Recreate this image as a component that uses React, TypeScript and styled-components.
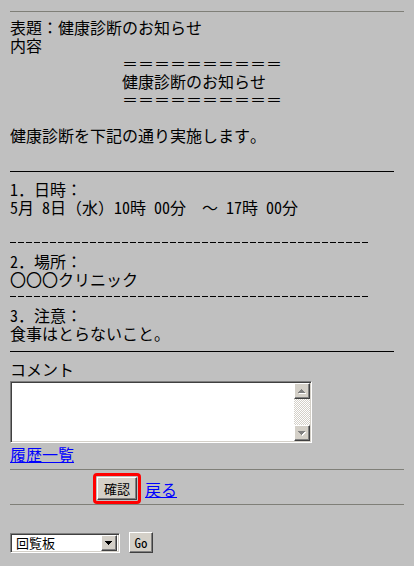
import React from "react";
import styled, { createGlobalStyle, css } from "styled-components";

const GlobalStyle = createGlobalStyle`
  html, body {
    margin: 0;
    padding: 0;
    background: #c0c0c0;
  }
  body {
    font-family: "Noto Sans Mono CJK JP", "Noto Sans CJK JP", sans-serif;
    font-size: 16px;
    line-height: 18px;
    color: #000;
  }
`;

const sunken = css`
  box-sizing: border-box;
  border: 1px solid;
  border-color: #808080 #ffffff #ffffff #808080;
  box-shadow: inset 1px 1px #404040, inset -1px -1px #d4d0c8;
`;

const raised = css`
  box-sizing: border-box;
  background: #d4d0c8;
  border: 1px solid;
  border-color: #ffffff #404040 #404040 #ffffff;
  box-shadow: inset -1px -1px #808080;
`;

const Page = styled.div`
  padding: 11px 10px 0;
  min-height: 566px;
  box-sizing: border-box;
`;

const Rule = styled.div<{ $gap?: number }>`
  height: 0;
  border-top: 1px solid #7f7f78;
  margin-top: ${(p) => p.$gap ?? 0}px;
`;

const Message = styled.div`
  margin-top: 6px;
`;

const Line = styled.div<{ $indent?: boolean }>`
  height: 18px;
  white-space: pre;
  padding-left: ${(p) => (p.$indent ? 112 : 0)}px;
`;

const Separator = styled.div<{ $dashed?: boolean }>`
  height: 18px;
  display: flex;
  &::after {
    content: "";
    margin-top: ${(p) => (p.$dashed ? 8 : 9)}px;
    height: 1px;
    width: ${(p) => (p.$dashed ? 360 : 384)}px;
    background: ${(p) =>
      p.$dashed
        ? "repeating-linear-gradient(to right, #000 0 6px, transparent 6px 8px)"
        : "#000"};
  }
`;

const CommentBox = styled.div`
  ${sunken};
  display: flex;
  width: 302px;
  height: 62px;
  margin-top: 3px;
  padding: 1px;
  background: #fff;
`;

const TextArea = styled.textarea`
  flex: 1;
  border: none;
  outline: none;
  resize: none;
  padding: 2px;
  margin: 0;
  background: #fff;
  font: inherit;
  font-size: 13px;
`;

const ScrollBar = styled.div`
  width: 16px;
  display: flex;
  flex-direction: column;
`;

const ScrollButton = styled.div`
  ${raised};
  width: 16px;
  height: 16px;
  display: flex;
  align-items: center;
  justify-content: center;
`;

const Track = styled.div`
  flex: 1;
  background: repeating-conic-gradient(#ffffff 0 25%, #d4d0c8 0 50%) 0 0 / 2px 2px;
`;

const LinkLine = styled.div`
  height: 18px;
  margin-top: 2px;
`;

const TextLink = styled.a`
  color: #0000ff;
  text-decoration: underline;
  cursor: pointer;
`;

const ActionRow = styled.div`
  display: flex;
  align-items: center;
  gap: 4px;
  margin-top: 3px;
  padding-left: 83px;
  height: 31px;
`;

const Highlight = styled.div`
  display: flex;
  border: 3px solid #ff0000;
  border-radius: 4px;
  padding: 1px;
`;

const Button = styled.button<{ $w?: number; $h?: number }>`
  ${raised};
  width: ${(p) => p.$w ?? 40}px;
  height: ${(p) => p.$h ?? 23}px;
  padding: 0;
  margin: 0;
  font-family: inherit;
  font-size: 13px;
  line-height: 1;
  color: #000;
`;

const JumpRow = styled.div`
  display: flex;
  align-items: flex-start;
  gap: 9px;
  margin-top: 27px;
`;

const SelectBox = styled.div`
  ${sunken};
  display: flex;
  align-items: center;
  width: 110px;
  height: 20px;
  margin-top: 1px;
  padding: 2px 2px 2px 5px;
  background: #fff;
  font-size: 13px;
  line-height: 16px;
`;

const SelectLabel = styled.span`
  flex: 1;
`;

const DropButton = styled.span`
  ${raised};
  width: 16px;
  height: 16px;
  display: flex;
  align-items: center;
  justify-content: center;
`;

const Arrow = ({ down, color = "#808080", shadow = true }: { down?: boolean; color?: string; shadow?: boolean }) => {
  const d = down
    ? "M0 0h7v1H0z M1 1h5v1H1z M2 2h3v1H2z M3 3h1v1H3z"
    : "M3 0h1v1H3z M2 1h3v1H2z M1 2h5v1H1z M0 3h7v1H0z";
  return (
    <svg width="8" height="5" viewBox="0 0 8 5" shapeRendering="crispEdges">
      {shadow && <path d={d} fill="#ffffff" transform="translate(1 1)" />}
      <path d={d} fill={color} />
    </svg>
  );
};

const App = () => {
  return (
    <Page>
      <GlobalStyle />
      <Rule />
      <Message>
        <Line>表題：健康診断のお知らせ</Line>
        <Line>内容</Line>
        <Line $indent>＝＝＝＝＝＝＝＝＝＝</Line>
        <Line $indent>健康診断のお知らせ</Line>
        <Line $indent>＝＝＝＝＝＝＝＝＝＝</Line>
        <Line />
        <Line>健康診断を下記の通り実施します。</Line>
        <Line />
        <Separator />
        <Line>1．日時：</Line>
        <Line>5月 8日（水）10時 00分　～ 17時 00分</Line>
        <Line />
        <Separator $dashed />
        <Line>2．場所：</Line>
        <Line>〇〇〇クリニック</Line>
        <Separator $dashed />
        <Line>3．注意：</Line>
        <Line>食事はとらないこと。</Line>
        <Separator />
        <Line>コメント</Line>
      </Message>

      <CommentBox>
        <TextArea />
        <ScrollBar>
          <ScrollButton>
            <Arrow />
          </ScrollButton>
          <Track />
          <ScrollButton>
            <Arrow down />
          </ScrollButton>
        </ScrollBar>
      </CommentBox>

      <LinkLine>
        <TextLink>履歴一覧</TextLink>
      </LinkLine>

      <Rule $gap={6} />
      <ActionRow>
        <Highlight>
          <Button>確認</Button>
        </Highlight>
        <TextLink>戻る</TextLink>
      </ActionRow>
      <Rule $gap={0} />

      <JumpRow>
        <SelectBox>
          <SelectLabel>回覧板</SelectLabel>
          <DropButton>
            <Arrow down color="#000" shadow={false} />
          </DropButton>
        </SelectBox>
        <Button $w={24} $h={21}>Go</Button>
      </JumpRow>
    </Page>
  );
};

export default App;
